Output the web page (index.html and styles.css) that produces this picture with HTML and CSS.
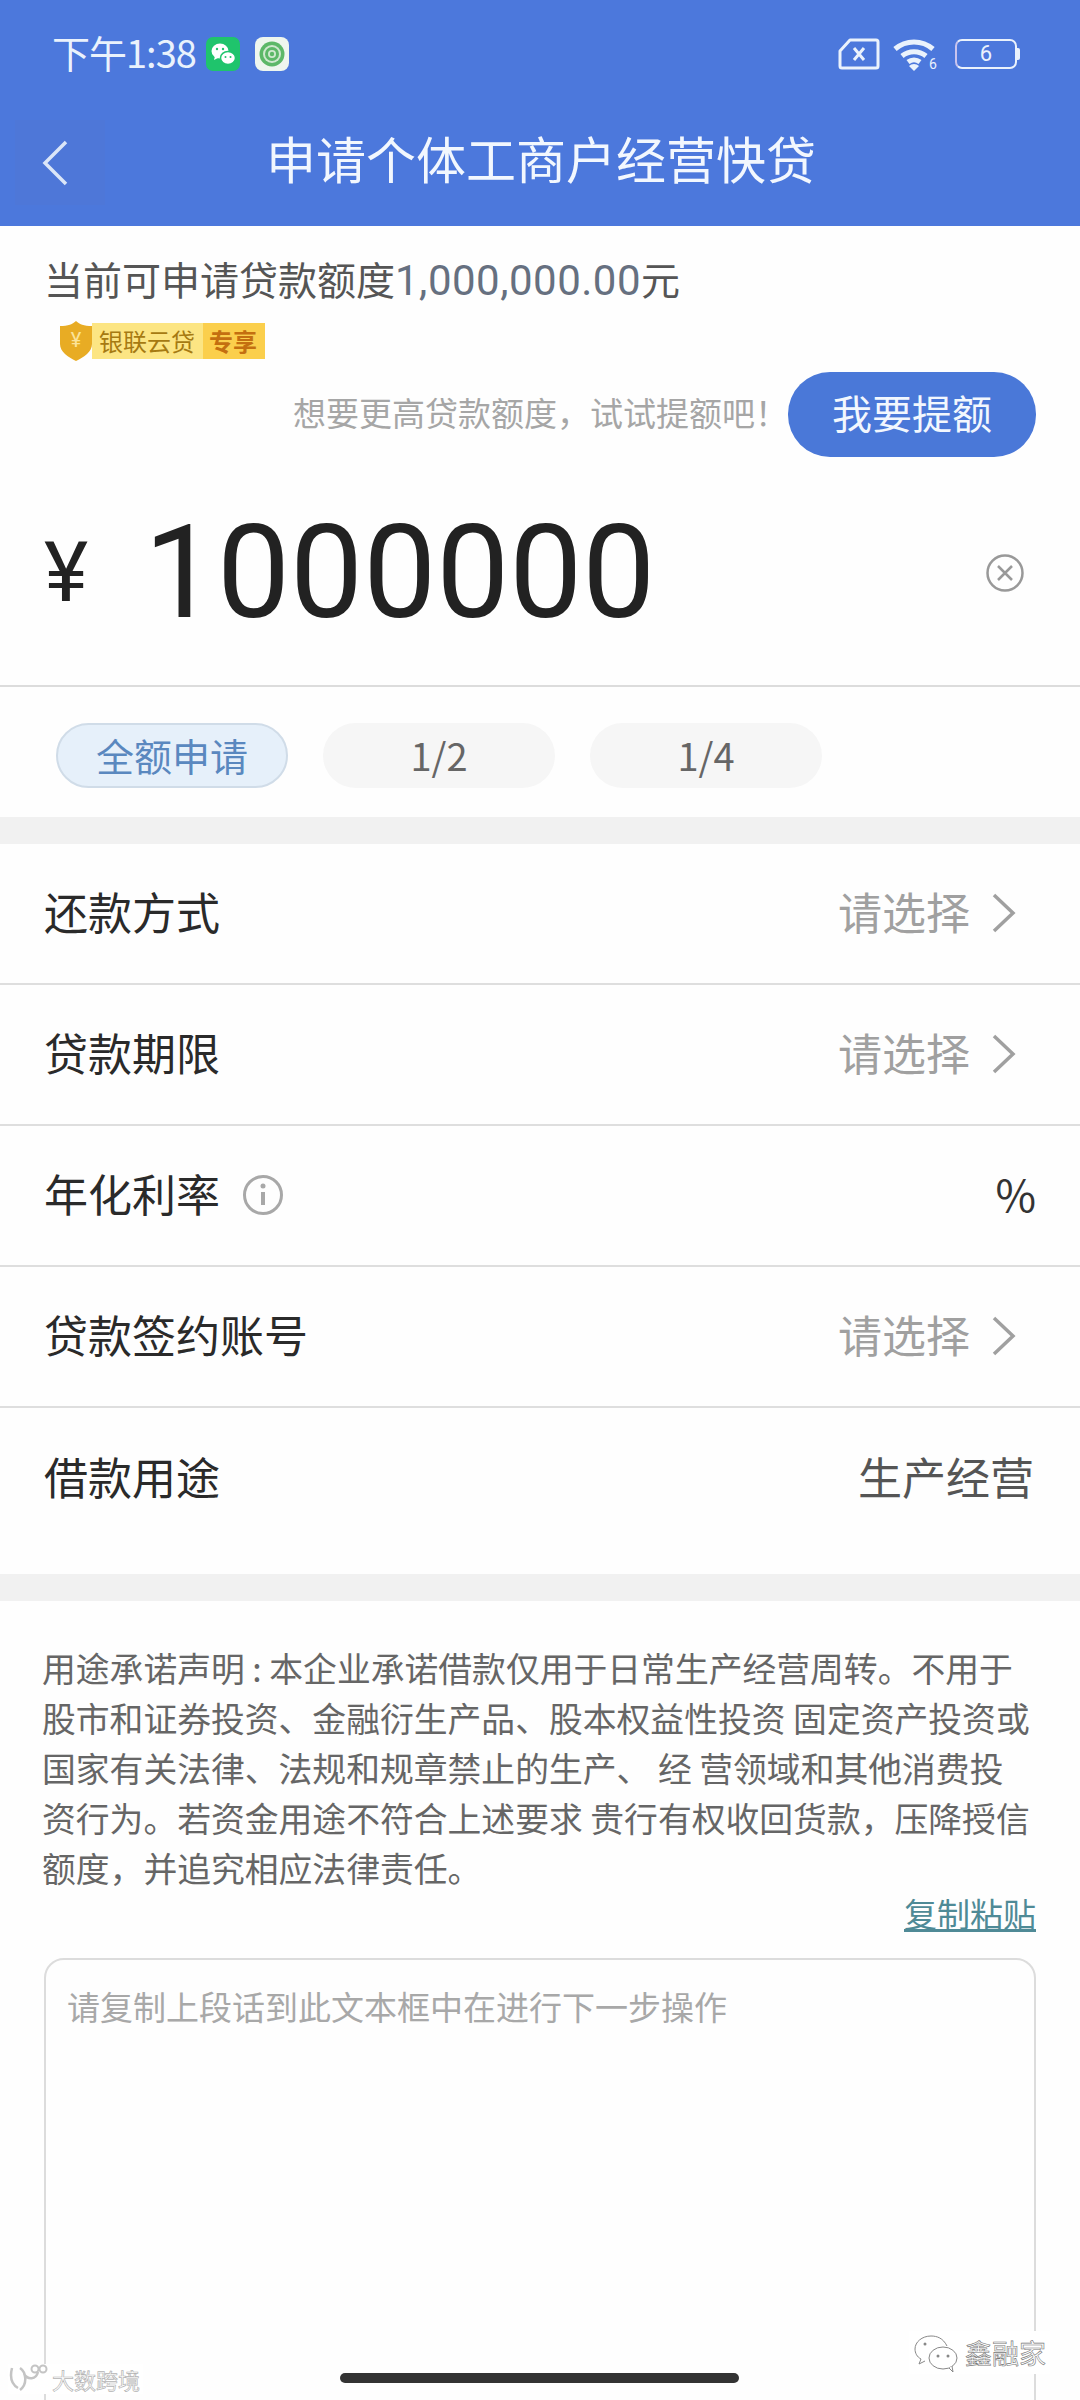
FILE: index.html
```html
<!DOCTYPE html>
<html lang="zh-CN">
<head>
    <meta charset="UTF-8">
    <meta name="viewport" content="width=device-width, initial-scale=1.0">
    <title>申请个体工商户经营快贷</title>
    <link rel="stylesheet" href="styles.css">
</head>
<body>
    <div class="page">
        <header class="header">
            <div class="status-bar">
                <div class="status-left">
                    <span class="time">下午1:38</span>
                    <svg class="app-icon" viewBox="0 0 34 34">
                        <rect width="34" height="34" rx="7" fill="#1fc46c"/>
                        <ellipse cx="14" cy="14" rx="8.5" ry="7.5" fill="#fff"/>
                        <path d="M9 19l-1 4 5-2.500z" fill="#fff"/>
                        <ellipse cx="22" cy="21" rx="7.500" ry="6.500" fill="#fff" stroke="#1fc46c" stroke-width="1.500"/>
                        <circle cx="11" cy="12" r="1.200" fill="#1fc46c"/>
                        <circle cx="17" cy="12" r="1.200" fill="#1fc46c"/>
                        <circle cx="19.500" cy="20" r="1" fill="#1fc46c"/>
                        <circle cx="24.500" cy="20" r="1" fill="#1fc46c"/>
                    </svg>
                    <svg class="app-icon second" viewBox="0 0 34 34">
                        <rect width="34" height="34" rx="8" fill="#eef6ee"/>
                        <circle cx="17" cy="17" r="12.500" fill="#5cb868"/>
                        <circle cx="17" cy="17" r="9" fill="#cfe8cf"/>
                        <circle cx="17" cy="17" r="7" fill="#5cb868"/>
                        <circle cx="17" cy="17" r="4" fill="#cfe8cf"/>
                        <circle cx="17" cy="17" r="2.200" fill="#5cb868"/>
                    </svg>
                </div>
                <div class="status-right">
                    <svg class="sim" viewBox="0 0 42 32">
                        <path d="M12 2h26a2 2 0 0 1 2 2v24a2 2 0 0 1-2 2H4a2 2 0 0 1-2-2V13z" fill="none" stroke="#eaf2fc" stroke-width="3" stroke-linejoin="round"/>
                        <path d="M16 10l10 12M26 10L16 22" stroke="#eaf2fc" stroke-width="3" fill="none"/>
                    </svg>
                    <svg class="wifi" viewBox="0 0 48 36">
                        <path d="M3 13a29 29 0 0 1 38 0M10 20a19 19 0 0 1 24 0M16 26a10 10 0 0 1 12 0" fill="none" stroke="#eaf2fc" stroke-width="5"/>
                        <path d="M22 35l-5-5a7 7 0 0 1 10 0z" fill="#eaf2fc"/>
                        <text class="wifi-six" x="37" y="33">6</text>
                    </svg>
                    <div class="battery">
                        <span class="battery-body">6</span>
                        <span class="battery-cap"></span>
                    </div>
                </div>
            </div>
            <div class="nav">
                <div class="back">
                    <svg class="back-icon" viewBox="0 0 26 46">
                        <path d="M24 2L3 23l21 21" fill="none" stroke="#dbe6f8" stroke-width="3.500"/>
                    </svg>
                </div>
                <h1 class="title">申请个体工商户经营快贷</h1>
            </div>
        </header>

        <section class="quota">
            <p class="quota-text">当前可申请贷款额度<span class="quota-num">1,000,000.00</span>元</p>
            <div class="badge">
                <svg class="shield" viewBox="0 0 32 40">
                    <path d="M16 0c3 3 8 5 16 5v18c0 8-8 13-16 17C8 36 0 31 0 23V5c8 0 13-2 16-5z" fill="#e8ac24"/>
                    <text class="shield-yen" x="16" y="26">¥</text>
                </svg>
                <span class="badge-main">银联云贷</span>
                <span class="badge-tag">专享</span>
            </div>
            <div class="raise">
                <span class="raise-hint">想要更高贷款额度，试试提额吧！</span>
                <button class="raise-btn" type="button">我要提额</button>
            </div>
        </section>

        <section class="amount">
            <span class="yen">¥</span>
            <span class="amount-num">1000000</span>
            <svg class="clear" viewBox="0 0 40 40">
                <circle cx="20" cy="20" r="17.500" fill="none" stroke="#999" stroke-width="2.500"/>
                <path d="M13 13l14 14M27 13L13 27" stroke="#999" stroke-width="2.500"/>
            </svg>
        </section>

        <section class="pills">
            <span class="pill active">全额申请</span>
            <span class="pill">1/2</span>
            <span class="pill">1/4</span>
        </section>

        <div class="band"></div>

        <section class="rows">
            <div class="row">
                <span class="row-label">还款方式</span>
                <span class="row-value muted">请选择
                    <svg class="arrow" viewBox="0 0 24 40"><path d="M2 2l19 18L2 38" fill="none" stroke="#a0a0a0" stroke-width="3.500"/></svg>
                </span>
            </div>
            <div class="row">
                <span class="row-label">贷款期限</span>
                <span class="row-value muted">请选择
                    <svg class="arrow" viewBox="0 0 24 40"><path d="M2 2l19 18L2 38" fill="none" stroke="#a0a0a0" stroke-width="3.500"/></svg>
                </span>
            </div>
            <div class="row">
                <span class="row-label">年化利率
                    <svg class="info" viewBox="0 0 42 42">
                        <circle cx="21" cy="21" r="18.500" fill="none" stroke="#a8a8a8" stroke-width="3"/>
                        <path d="M21 18v13" stroke="#a8a8a8" stroke-width="4"/>
                        <circle cx="21" cy="12" r="2.500" fill="#a8a8a8"/>
                    </svg>
                </span>
                <span class="row-value">%</span>
            </div>
            <div class="row">
                <span class="row-label">贷款签约账号</span>
                <span class="row-value muted">请选择
                    <svg class="arrow" viewBox="0 0 24 40"><path d="M2 2l19 18L2 38" fill="none" stroke="#a0a0a0" stroke-width="3.500"/></svg>
                </span>
            </div>
            <div class="row last">
                <span class="row-label">借款用途</span>
                <span class="row-value plain">生产经营</span>
            </div>
        </section>

        <div class="band"></div>

        <section class="promise">
            <p class="promise-text">用途承诺声明 : 本企业承诺借款仅用于日常生产经营周转。不用于股市和证券投资、金融衍生产品、股本权益性投资 固定资产投资或国家有关法律、法规和规章禁止的生产、 经 营领域和其他消费投资行为。若资金用途不符合上述要求 贵行有权收回货款，压降授信额度，并追究相应法律责任。</p>
            <div class="copy-wrap"><a class="copy-link">复制粘贴</a></div>
            <div class="input-box">请复制上段话到此文本框中在进行下一步操作</div>
        </section>

        <div class="home-bar"></div>

        <div class="mark mark-left">
            <svg class="mark-logo" viewBox="0 0 40 30">
                <path d="M4 4c-2 8-1 16 6 20M12 4c6 4 8 16 0 22M16 10c4 6 12 6 14-2" fill="none" stroke="#c4c4c4" stroke-width="2.500"/>
                <circle cx="27" cy="5" r="3.500" fill="none" stroke="#c4c4c4" stroke-width="2"/>
                <circle cx="35" cy="5" r="3.500" fill="none" stroke="#c4c4c4" stroke-width="2"/>
            </svg>
            <span class="mark-text">大数跨境</span>
        </div>
        <div class="mark mark-right">
            <svg class="mark-wechat" viewBox="0 0 46 38">
                <path d="M18 2C9 2 2 8 2 15c0 4 2 8 6 10l-2 5 6-3M34 12C30 4 24 2 18 2" fill="none" stroke="#888" stroke-width="1"/>
                <ellipse cx="30" cy="24" rx="14" ry="11" fill="#fff" stroke="#888" stroke-width="1"/>
                <path d="M36 34l4 4-1-6" fill="#fff" stroke="#888" stroke-width="1"/>
                <circle cx="12" cy="10" r="1.500" fill="#888"/>
                <circle cx="25" cy="22" r="1.500" fill="#888"/>
                <circle cx="35" cy="22" r="1.500" fill="#888"/>
            </svg>
            <span class="mark-text">鑫融家</span>
        </div>
    </div>
</body>
</html>
```

FILE: styles.css
```css
/* General Style */
html, body {
    margin: 0;
    padding: 0;
}

body {
    font-family: "Noto Sans CJK SC", "Noto Sans", sans-serif;
    background-color: #fff;
    color: #333;
}

.page {
    position: relative;
    width: 1080px;
    height: 2400px;
    overflow: hidden;
    background-color: #fefefe;
}

/* Header */
.header {
    height: 226px;
    background-color: #4c78dc;
    color: #eaf2fc;
}

.status-bar {
    height: 108px;
    padding: 0 60px 0 52px;
    display: flex;
    justify-content: space-between;
    align-items: center;
    box-sizing: border-box;
}

.status-left,
.status-right {
    display: flex;
    align-items: center;
}

.time {
    font-size: 38px;
    line-height: 40px;
    letter-spacing: -1px;
    width: 154px;
    margin-top: -5px;
    white-space: nowrap;
}

.app-icon {
    width: 34px;
    height: 34px;
}

.app-icon.second {
    margin-left: 15px;
}

.sim {
    width: 42px;
    height: 32px;
}

.wifi {
    width: 48px;
    height: 36px;
    margin-left: 12px;
}

.wifi-six {
    font-family: "Roboto", sans-serif;
    font-size: 14px;
    fill: #eaf2fc;
}

.battery {
    display: flex;
    align-items: center;
    margin-left: 15px;
}

.battery-body {
    width: 62px;
    height: 30px;
    border: 2.5px solid #eaf2fc;
    border-left-color: #c9c4ee;
    border-radius: 7px;
    box-sizing: border-box;
    font-family: "Roboto", sans-serif;
    font-size: 22px;
    line-height: 25px;
    text-align: center;
}

.battery-cap {
    width: 3px;
    height: 12px;
    background-color: #eaf2fc;
    border-radius: 0 2px 2px 0;
}

.nav {
    position: relative;
    height: 104px;
    display: flex;
    align-items: center;
    justify-content: center;
}

.back {
    position: absolute;
    left: 15px;
    top: 12px;
    width: 90px;
    height: 85px;
    display: flex;
    align-items: center;
    padding-left: 27px;
    box-sizing: border-box;
    background-color: #4e77d8;
}

.back-icon {
    width: 26px;
    height: 46px;
}

.title {
    margin: -6px 0 0 2px;
    font-size: 50px;
    font-weight: 400;
    line-height: 60px;
    color: #f2f7fe;
}

/* Quota */
.quota {
    height: 296px;
    padding: 27px 44px 0 44px;
    box-sizing: border-box;
}

.quota-text {
    margin: 0;
    font-size: 39px;
    line-height: 50px;
    color: #555;
    white-space: nowrap;
}

.quota-num {
    font-family: "Roboto", sans-serif;
    font-size: 42px;
    letter-spacing: 0.5px;
    color: #667080;
}

.badge {
    margin: 15px 0 0 16px;
    height: 40px;
    display: flex;
    align-items: center;
}

.shield {
    width: 32px;
    height: 40px;
    position: relative;
    z-index: 1;
}

.shield-yen {
    font-family: "Roboto", sans-serif;
    font-size: 20px;
    text-anchor: middle;
    fill: #fbe39a;
}

.badge-main,
.badge-tag {
    height: 36px;
    font-size: 24px;
    line-height: 36px;
    white-space: nowrap;
}

.badge-main {
    width: 111px;
    padding-left: 7px;
    box-sizing: border-box;
    background-color: #fce583;
    color: #a67a12;
}

.badge-tag {
    width: 62px;
    padding-left: 6px;
    box-sizing: border-box;
    background-color: #fbcf4c;
    color: #c46f10;
    font-weight: 700;
}

.raise {
    margin-top: 11px;
    display: flex;
    justify-content: flex-end;
    align-items: center;
}

.raise-hint {
    font-size: 33px;
    line-height: 40px;
    color: #a6a6a6;
    margin: -6px 0 0 0;
    white-space: nowrap;
}

.raise-btn {
    flex: none;
    width: 248px;
    height: 85px;
    border: none;
    border-radius: 42px;
    background-color: #4a78d8;
    color: #f2f7fe;
    font-family: inherit;
    font-size: 40px;
    padding: 0 0 6px 0;
}

/* Amount */
.amount {
    height: 165px;
    padding: 0 44px 62px 44px;
    box-sizing: border-box;
    display: flex;
    align-items: center;
    border-bottom: 2px solid #dcdcdc;
}

.yen {
    font-family: "Roboto", sans-serif;
    font-size: 84px;
    width: 100px;
    color: #222;
}

.amount-num {
    flex: 1;
    font-family: "Roboto", sans-serif;
    font-size: 130px;
    line-height: 140px;
    color: #222;
}

.clear {
    width: 40px;
    height: 40px;
    margin-right: 11px;
}

/* Amount pills */
.pills {
    height: 130px;
    padding: 36px 0 0 56px;
    box-sizing: border-box;
    display: flex;
    gap: 35px;
}

.pill {
    width: 232px;
    height: 65px;
    border-radius: 33px;
    background-color: #f6f6f6;
    color: #666;
    font-size: 38px;
    line-height: 63px;
    text-align: center;
}

.pill.active {
    background-color: #e6f0fa;
    color: #5a88bf;
    border: 2px solid #d0dce8;
    box-sizing: border-box;
    line-height: 59px;
}

.band {
    height: 27px;
    background-color: #f1f1f1;
}

/* Rows */
.row {
    height: 141px;
    padding: 0 44px 5px 44px;
    box-sizing: border-box;
    display: flex;
    justify-content: space-between;
    align-items: center;
    border-bottom: 2px solid #dedede;
}

.row.last {
    height: 166px;
    padding-bottom: 30px;
    border-bottom: none;
}

.row-label {
    display: flex;
    align-items: center;
    font-size: 44px;
    color: #2a2a2a;
}

.row-value {
    display: flex;
    align-items: center;
    font-size: 44px;
    color: #333;
}

.row-value.muted {
    color: #a0a0a0;
    margin-right: 20px;
}

.row-value.plain {
    color: #555;
    margin-right: 2px;
}

.arrow {
    width: 24px;
    height: 40px;
    margin: 4px 0 0 22px;
}

.info {
    width: 42px;
    height: 42px;
    margin: 4px 0 0 22px;
}

/* Promise text */
.promise {
    padding: 42px 44px 0 42px;
}

.promise-text {
    margin: 0;
    font-size: 33.800px;
    line-height: 50px;
    color: #666;
}

.copy-wrap {
    margin-top: -2px;
    text-align: right;
}

.copy-link {
    font-size: 33px;
    line-height: 44px;
    color: #4f8a96;
    text-decoration: underline;
}

.input-box {
    margin: 23px 0 0 2px;
    height: 500px;
    padding: 24px 21px;
    box-sizing: border-box;
    border: 2.5px solid #dcdcdc;
    border-radius: 20px;
    font-size: 33px;
    line-height: 44px;
    color: #a8a8a8;
}

.home-bar {
    position: absolute;
    left: 340px;
    bottom: 17px;
    width: 399px;
    height: 10px;
    border-radius: 5px;
    background-color: #333;
}

/* Watermarks */
.mark {
    position: absolute;
    display: flex;
    align-items: center;
    background-color: #fff;
}

.mark-text {
    white-space: nowrap;
    color: #fff;
}

.mark-left {
    left: 8px;
    bottom: 6px;
    width: 135px;
    height: 30px;
    font-size: 22px;
    -webkit-text-stroke: 0.7px #b4b4b4;
}

.mark-logo {
    width: 40px;
    height: 30px;
    margin-right: 4px;
    flex: none;
}

.mark-right {
    right: 30px;
    top: 2331px;
    padding: 2px 4px;
    font-size: 27px;
    -webkit-text-stroke: 0.6px #777;
}

.mark-wechat {
    width: 46px;
    height: 38px;
    margin-right: 6px;
}
```
